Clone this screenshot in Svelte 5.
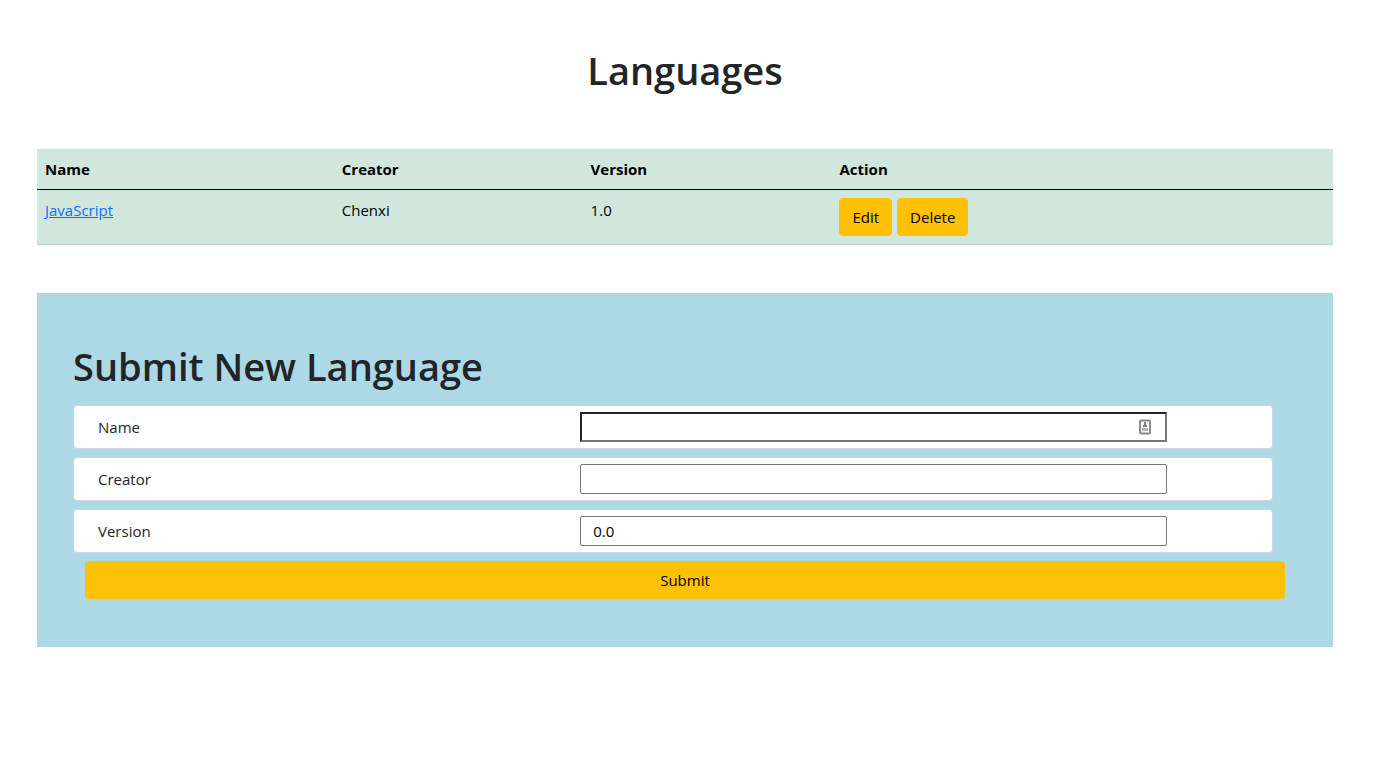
<script>
  const languages = [{ name: 'JavaScript', creator: 'Chenxi', version: '1.0' }];
  let name = $state('');
  let creator = $state('');
  let version = $state('0.0');
</script>

<main>
  <h1 class="title">Languages</h1>

  <table>
    <thead>
      <tr>
        <th class="wide" scope="col">Name</th>
        <th class="narrow" scope="col">Creator</th>
        <th class="narrow" scope="col">Version</th>
        <th scope="col">Action</th>
      </tr>
    </thead>
    <tbody>
      {#each languages as language}
        <tr>
          <td><a href="#language">{language.name}</a></td>
          <td>{language.creator}</td>
          <td>{language.version}</td>
          <td>
            <div class="actions">
              <button class="btn" type="button">Edit</button>
              <button class="btn" type="button">Delete</button>
            </div>
          </td>
        </tr>
      {/each}
    </tbody>
  </table>

  <form onsubmit={(event) => event.preventDefault()}>
    <h1>Submit New Language</h1>
    <div class="field">
      <label for="name">Name</label>
      <div class="control">
        <input id="name" class="inset" type="text" autocomplete="off" bind:value={name} />
        <svg class="badge" width="12" height="16" viewBox="0 0 12 16" aria-hidden="true">
          <rect x="1" y="1.5" width="10" height="13" rx="1" fill="#f4f4f4" stroke="#8c8c8c" stroke-width="2" />
          <path d="M5 3h2v3h1v2H4V6h1z" fill="#7d7d7d" />
          <path d="M3 9h6v3H3z" fill="#b4b4b4" />
        </svg>
      </div>
    </div>
    <div class="field">
      <label for="creator">Creator</label>
      <div class="control">
        <input id="creator" type="text" autocomplete="off" bind:value={creator} />
      </div>
    </div>
    <div class="field">
      <label for="version">Version</label>
      <div class="control">
        <input id="version" type="text" autocomplete="off" bind:value={version} />
      </div>
    </div>
    <button class="btn submit" type="submit">Submit</button>
  </form>
</main>

<style>
  :global(body) {
    margin: 0;
    background: #fff;
    color: #212529;
    font-family: "Open Sans", "Noto Sans", sans-serif;
    font-size: 15px;
    line-height: 24px;
  }

  * {
    box-sizing: border-box;
  }

  main {
    padding: 46px 65px 48px 37px;
  }

  h1 {
    margin: 0 0 15px;
    font-size: 38px;
    font-weight: 600;
    line-height: 48px;
  }

  .title {
    margin-bottom: 55px;
    text-align: center;
  }

  table {
    width: 100%;
    table-layout: fixed;
    border-collapse: separate;
    border-spacing: 0;
    background: #d1e7dd;
    color: #000;
  }

  th,
  td {
    padding: 8px;
    text-align: left;
    vertical-align: top;
  }

  th {
    border-bottom: 1px solid #000;
    font-weight: 700;
  }

  td {
    border-bottom: 1px solid #bcd0c7;
  }

  .wide {
    width: 22.9%;
  }

  .narrow {
    width: 19.2%;
  }

  a {
    color: #0d6efd;
    text-decoration: underline;
  }

  .actions {
    display: flex;
    gap: 5px;
  }

  .btn {
    padding: 6px 12px;
    border: 1px solid #ffc107;
    border-radius: 4px;
    background: #ffc107;
    color: #000;
    font: inherit;
    cursor: pointer;
  }

  form {
    display: flex;
    flex-direction: column;
    margin-top: 48px;
    padding: 49px 48px 48px 36px;
    background: #add8e6;
  }

  .field {
    display: flex;
    align-items: center;
    margin: 0 12px 8px 0;
    padding: 6px 12px;
    border: 1px solid #ced4da;
    border-radius: 4px;
    background: #fff;
  }

  label {
    width: 42.1%;
    padding-left: 12px;
  }

  .control {
    position: relative;
    display: flex;
    width: 50%;
  }

  input {
    width: 100%;
    height: 30px;
    padding: 0 12px;
    border: 1px solid #767676;
    border-radius: 2px;
    outline: none;
    background: #fff;
    color: #000;
    font: inherit;
  }

  .inset {
    border: 2px solid;
    border-color: #212529 #767676 #767676 #212529;
    border-radius: 0;
  }

  .badge {
    position: absolute;
    top: 7px;
    right: 16px;
  }

  .submit {
    margin-left: 12px;
  }
</style>
